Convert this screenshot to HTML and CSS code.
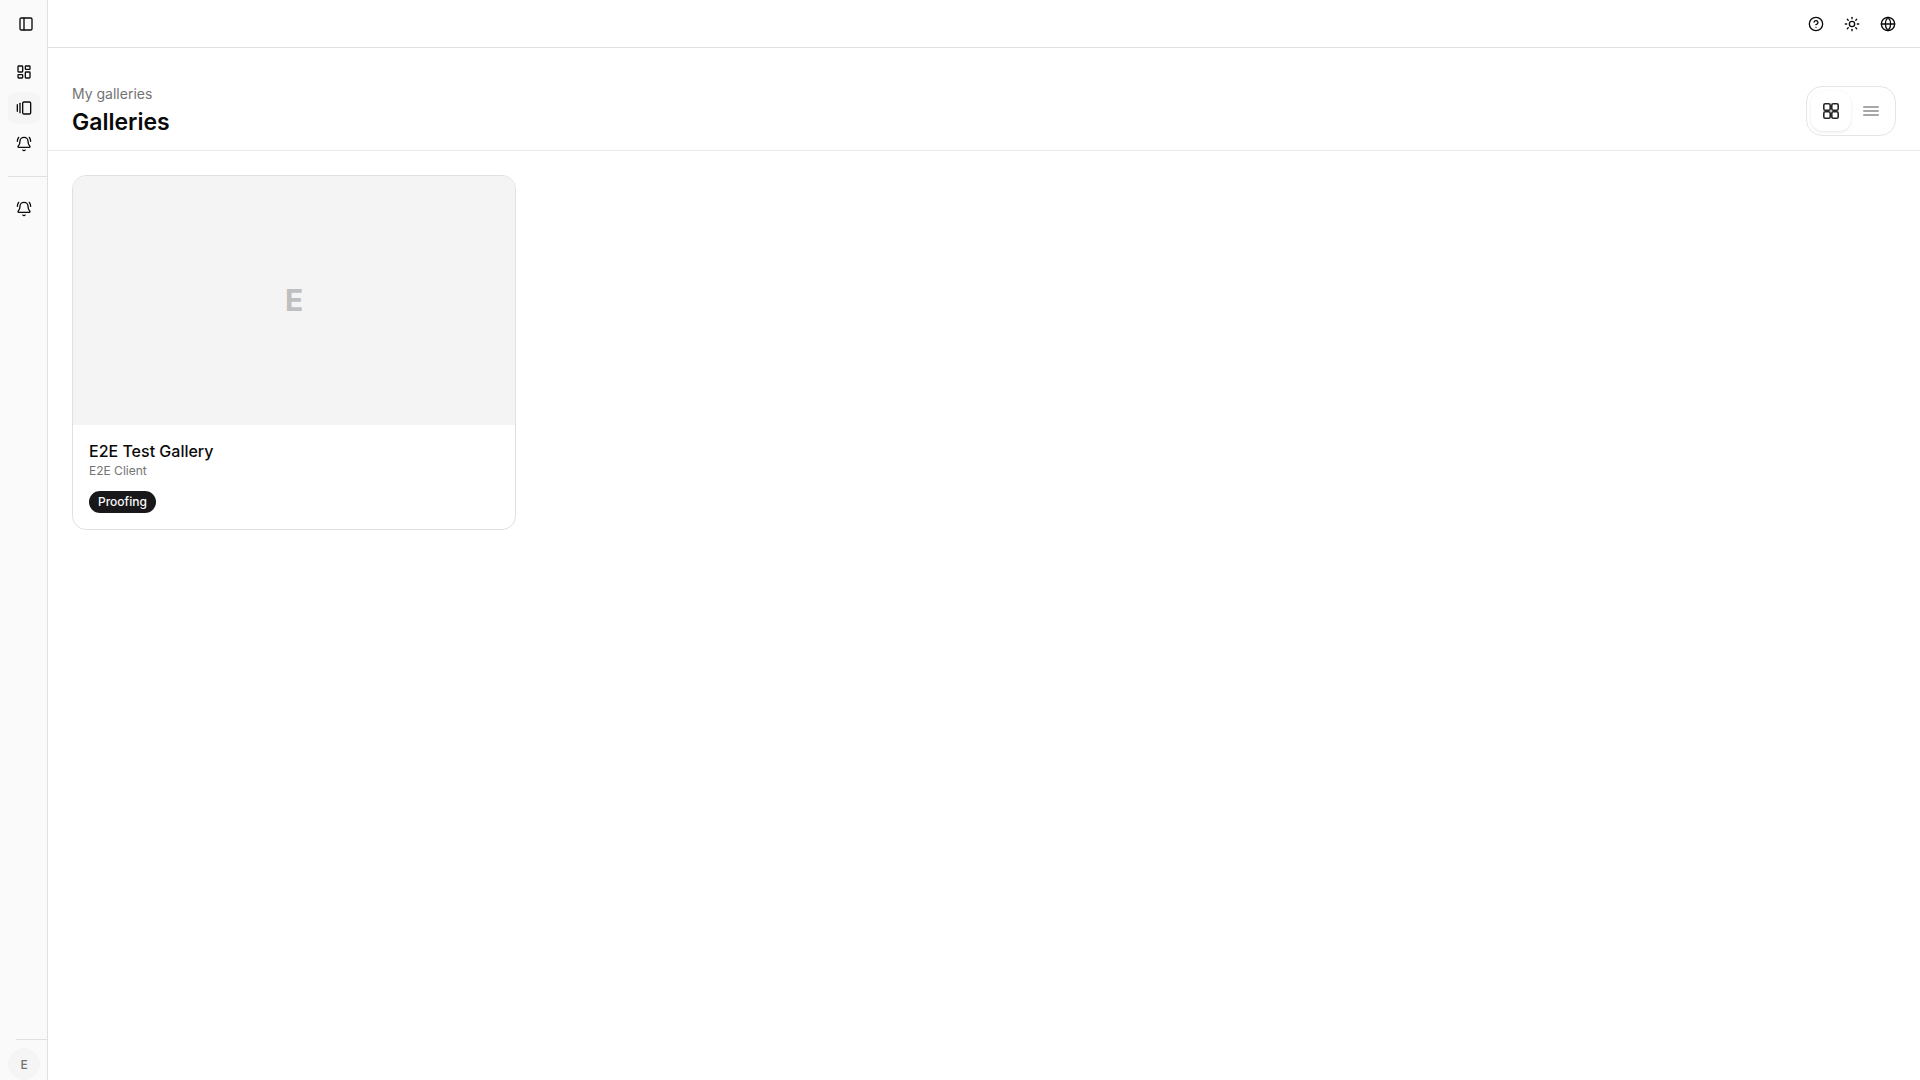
FILE: index.html
```
<!DOCTYPE html>
<html lang="en">
<head>
    <meta charset="UTF-8">
    <meta name="viewport" content="width=device-width, initial-scale=1.0">
    <title>Galleries</title>
    <link rel="stylesheet" href="styles.css">
</head>
<body>
    <aside class="sidebar">
        <div class="sidebar-top">
            <button class="icon-btn" type="button" aria-label="Toggle sidebar">
                <svg class="icon" viewBox="0 0 24 24"><rect width="18" height="18" x="3" y="3" rx="2"/><path d="M9 3v18"/></svg>
            </button>
        </div>
        <nav class="sidebar-nav">
            <a class="nav-link" href="#" aria-label="Dashboard">
                <svg class="icon" viewBox="0 0 24 24"><rect width="7" height="9" x="3" y="3" rx="1"/><rect width="7" height="5" x="14" y="3" rx="1"/><rect width="7" height="9" x="14" y="12" rx="1"/><rect width="7" height="5" x="3" y="16" rx="1"/></svg>
            </a>
            <a class="nav-link active" href="#" aria-label="Galleries">
                <svg class="icon" viewBox="0 0 24 24"><path d="M2 7v10"/><path d="M6 5v14"/><rect width="12" height="18" x="10" y="3" rx="2"/></svg>
            </a>
            <a class="nav-link" href="#" aria-label="Notifications">
                <svg class="icon" viewBox="0 0 24 24"><path d="M10.268 21a2 2 0 0 0 3.464 0"/><path d="M22 8c0-2.3-.8-4.3-2-6"/><path d="M3.262 15.326A1 1 0 0 0 4 17h16a1 1 0 0 0 .74-1.673C19.41 13.956 18 12.499 18 8A6 6 0 0 0 6 8c0 4.499-1.411 5.956-2.738 7.326"/><path d="M4 2C2.8 3.7 2 5.7 2 8"/></svg>
            </a>
        </nav>
        <div class="sidebar-extra">
            <a class="nav-link" href="#" aria-label="Alerts">
                <svg class="icon" viewBox="0 0 24 24"><path d="M10.268 21a2 2 0 0 0 3.464 0"/><path d="M22 8c0-2.3-.8-4.3-2-6"/><path d="M3.262 15.326A1 1 0 0 0 4 17h16a1 1 0 0 0 .74-1.673C19.41 13.956 18 12.499 18 8A6 6 0 0 0 6 8c0 4.499-1.411 5.956-2.738 7.326"/><path d="M4 2C2.8 3.7 2 5.7 2 8"/></svg>
            </a>
        </div>
        <div class="sidebar-footer">
            <button class="avatar" type="button">E</button>
        </div>
    </aside>
    <div class="page">
        <header class="topbar">
            <button class="icon-btn" type="button" aria-label="Help">
                <svg class="icon" viewBox="0 0 24 24"><circle cx="12" cy="12" r="10"/><path d="M9.09 9a3 3 0 0 1 5.83 1c0 2-3 3-3 3"/><path d="M12 17h.01"/></svg>
            </button>
            <button class="icon-btn" type="button" aria-label="Theme">
                <svg class="icon" viewBox="0 0 24 24"><circle cx="12" cy="12" r="4"/><path d="M12 2v2"/><path d="M12 20v2"/><path d="m4.93 4.93 1.41 1.41"/><path d="m17.66 17.66 1.41 1.41"/><path d="M2 12h2"/><path d="M20 12h2"/><path d="m6.34 17.66-1.41 1.41"/><path d="m19.07 4.93-1.41 1.41"/></svg>
            </button>
            <button class="icon-btn" type="button" aria-label="Language">
                <svg class="icon" viewBox="0 0 24 24"><circle cx="12" cy="12" r="10"/><path d="M12 2a14.5 14.5 0 0 0 0 20 14.5 14.5 0 0 0 0-20"/><path d="M2 12h20"/></svg>
            </button>
        </header>
        <main>
            <div class="page-header">
                <div class="page-title">
                    <p>My galleries</p>
                    <h1>Galleries</h1>
                </div>
                <div class="view-toggle">
                    <button class="view-btn active" type="button" aria-label="Grid view" aria-pressed="true">
                        <svg class="icon" viewBox="0 0 20 20"><rect width="6.4" height="6.4" x="2.8" y="2.8" rx="1.4"/><rect width="6.4" height="6.4" x="10.8" y="2.8" rx="1.4"/><rect width="6.4" height="6.4" x="10.8" y="10.8" rx="1.4"/><rect width="6.4" height="6.4" x="2.8" y="10.8" rx="1.4"/></svg>
                    </button>
                    <button class="view-btn" type="button" aria-label="List view" aria-pressed="false">
                        <svg class="icon" viewBox="0 0 20 20"><path d="M2.8 6h14.4"/><path d="M2.8 10h14.4"/><path d="M2.8 14h14.4"/></svg>
                    </button>
                </div>
            </div>
            <div class="gallery-grid">
                <a class="gallery-card" href="#">
                    <div class="gallery-cover">E</div>
                    <div class="gallery-info">
                        <h2>E2E Test Gallery</h2>
                        <p>E2E Client</p>
                        <span class="badge">Proofing</span>
                    </div>
                </a>
            </div>
        </main>
    </div>
</body>
</html>
```

FILE: styles.css
```
* {
    box-sizing: border-box;
}
body {
    display: flex;
    min-height: 100vh;
    margin: 0;
    font-family: Inter, "Liberation Sans", sans-serif;
    color: #0a0a0a;
    background-color: #fff;
}
h1, h2, p {
    margin: 0;
}
button {
    padding: 0;
    border: none;
    background: none;
    font-family: inherit;
    color: inherit;
    cursor: pointer;
}
a {
    color: inherit;
    text-decoration: none;
}
.icon {
    display: block;
    width: 16px;
    height: 16px;
    fill: none;
    stroke: currentColor;
    stroke-width: 2;
    stroke-linecap: round;
    stroke-linejoin: round;
}
.sidebar {
    display: flex;
    flex-direction: column;
    flex-shrink: 0;
    width: 48px;
    background-color: #fafafa;
    border-right: 1px solid #e0e0e0;
}
.sidebar-top {
    display: flex;
    align-items: center;
    height: 48px;
    padding-left: 10px;
}
.icon-btn,
.nav-link {
    display: flex;
    align-items: center;
    justify-content: center;
    width: 32px;
    height: 32px;
    border-radius: 8px;
}
.sidebar-nav {
    display: flex;
    flex-direction: column;
    gap: 4px;
    padding: 8px 0 16px 8px;
}
.nav-link.active {
    background-color: #f5f5f5;
}
.sidebar-extra {
    margin-left: 8px;
    padding-top: 16px;
    border-top: 1px solid #e0e0e0;
}
.sidebar-footer {
    margin-top: auto;
    padding-left: 8px;
}
.sidebar-footer::before {
    content: "";
    display: block;
    margin: 0 0 8px 8px;
    border-top: 1px solid #e0e0e0;
}
.avatar {
    display: flex;
    align-items: center;
    justify-content: center;
    width: 32px;
    height: 32px;
    border-radius: 50%;
    background-color: #f5f5f5;
    color: #737373;
    font-size: 12px;
    font-weight: 500;
}
.page {
    flex: 1;
    min-width: 0;
}
.topbar {
    display: flex;
    align-items: center;
    justify-content: flex-end;
    gap: 4px;
    height: 48px;
    padding: 0 16px;
    border-bottom: 1px solid #e0e0e0;
}
.page-header {
    display: flex;
    align-items: center;
    justify-content: space-between;
    padding: 36px 24px 12px;
    border-bottom: 1px solid #ebebeb;
}
.page-title p {
    margin-bottom: 2px;
    font-size: 14px;
    line-height: 20px;
    color: #737373;
}
.page-title h1 {
    font-size: 23px;
    line-height: 32px;
    font-weight: 600;
}
.view-toggle {
    display: flex;
    padding: 4px;
    border: 1px solid #e5e5e5;
    border-radius: 16px;
}
.view-btn {
    display: flex;
    align-items: center;
    justify-content: center;
    width: 40px;
    height: 40px;
    border-radius: 12px;
    color: #8a8a8a;
}
.view-btn .icon {
    width: 20px;
    height: 20px;
    stroke-width: 1.6;
}
.view-btn.active {
    color: #262626;
    background-color: #fff;
    box-shadow: 0 1px 3px rgba(0, 0, 0, 0.1);
}
.gallery-grid {
    display: grid;
    grid-template-columns: repeat(4, 1fr);
    gap: 16px;
    padding: 24px;
}
.gallery-card {
    overflow: hidden;
    border: 1px solid #e0e0e0;
    border-radius: 14px;
}
.gallery-cover {
    display: flex;
    align-items: center;
    justify-content: center;
    aspect-ratio: 16 / 9;
    background-color: #f4f4f4;
    color: #bfbfbf;
    font-size: 30px;
    font-weight: 700;
}
.gallery-info {
    padding: 16px;
}
.gallery-info h2 {
    font-size: 16px;
    line-height: 20px;
    font-weight: 500;
}
.gallery-info p {
    font-size: 12px;
    line-height: 20px;
    color: #737373;
}
.badge {
    display: inline-block;
    margin-top: 10px;
    padding: 3px 9px;
    border-radius: 11px;
    background-color: #18181b;
    color: #fafafa;
    font-size: 12px;
    line-height: 16px;
    font-weight: 500;
}
```
